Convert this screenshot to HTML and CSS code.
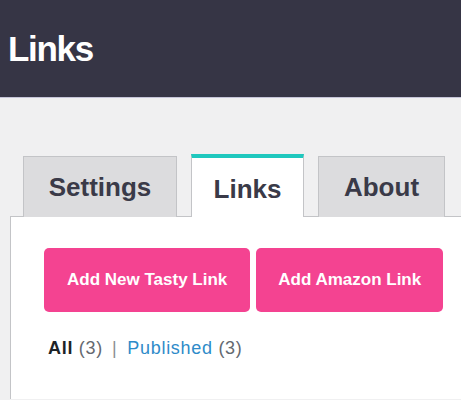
FILE: index.html
```html
<!DOCTYPE html>
<html>
<head>
<meta charset="utf-8">
<link rel="stylesheet" href="styles.css">
</head>
<body>
<header class="topbar"><h1 class="title">Links</h1></header>
<div class="wrap">
  <nav class="tabs">
    <a class="tab tab-settings">Settings</a>
    <a class="tab tab-links active">Links</a>
    <a class="tab tab-about">About</a>
  </nav>
  <section class="panel">
    <div class="actions">
      <a class="btn btn-tasty">Add New Tasty Link</a>
      <a class="btn btn-amazon">Add Amazon Link</a>
    </div>
    <ul class="filters">
      <li><b class="current">All</b> <span class="count">(3)</span></li>
      <li class="sep">|</li>
      <li><a class="link">Published</a> <span class="count">(3)</span></li>
    </ul>
  </section>
</div>
</body>
</html>
```

FILE: styles.css
```css
html, body {
  margin: 0;
  padding: 0;
  background: #f0f0f1;
  font-family: "Liberation Sans", Arial, sans-serif;
  overflow: hidden;
}
.topbar {
  height: 97px;
  background: #363545;
  border-bottom: 1px solid #c5c4d8;
  display: flex;
  align-items: center;
  padding-left: 8px;
}
.title {
  margin: 0;
  color: #fff;
  font-size: 35px;
  line-height: 1;
  font-weight: bold;
  letter-spacing: -1.3px;
}
.wrap {
  margin-left: 10px;
  padding-top: 56px;
}
.tabs {
  display: flex;
  align-items: flex-end;
  gap: 14px;
  padding-left: 13px;
}
.tab {
  box-sizing: border-box;
  height: 61px;
  display: flex;
  align-items: center;
  justify-content: center;
  background: #dcdcde;
  border: 1px solid #c3c4c7;
  border-bottom: none;
  color: #3a3a48;
  font-size: 26px;
  font-weight: bold;
  margin-bottom: -1px;
  position: relative;
}
.tab-settings { width: 154px; }
.tab-links { width: 113px; }
.tab-about { width: 127px; }
.tab.active {
  height: 63px;
  background: #fff;
  border-top: 4px solid #1fc8be;
  padding-top: 4px;
  z-index: 1;
}
.panel {
  background: #fff;
  border-top: 1px solid #c3c4c7;
  border-left: 1px solid #c3c4c7;
  padding: 31px 0 40px 33px;
}
.actions {
  display: flex;
  gap: 6px;
}
.btn {
  height: 64px;
  box-sizing: border-box;
  display: flex;
  align-items: center;
  background: #f44391;
  color: #fff;
  border-radius: 5px;
  font-size: 17px;
  font-weight: bold;
}
.btn-tasty {
  padding: 0 23px;
}
.btn-amazon {
  padding: 0 22px;
}
.filters {
  list-style: none;
  margin: 26px 0 0 4px;
  padding: 0;
  display: flex;
  font-size: 18px;
  letter-spacing: 0.7px;
  color: #646970;
}
.current {
  color: #1d2327;
}
.sep {
  margin: 0 10px 0 9px;
  color: #8c8f94;
}
.link {
  color: #2e8bc9;
}
```
